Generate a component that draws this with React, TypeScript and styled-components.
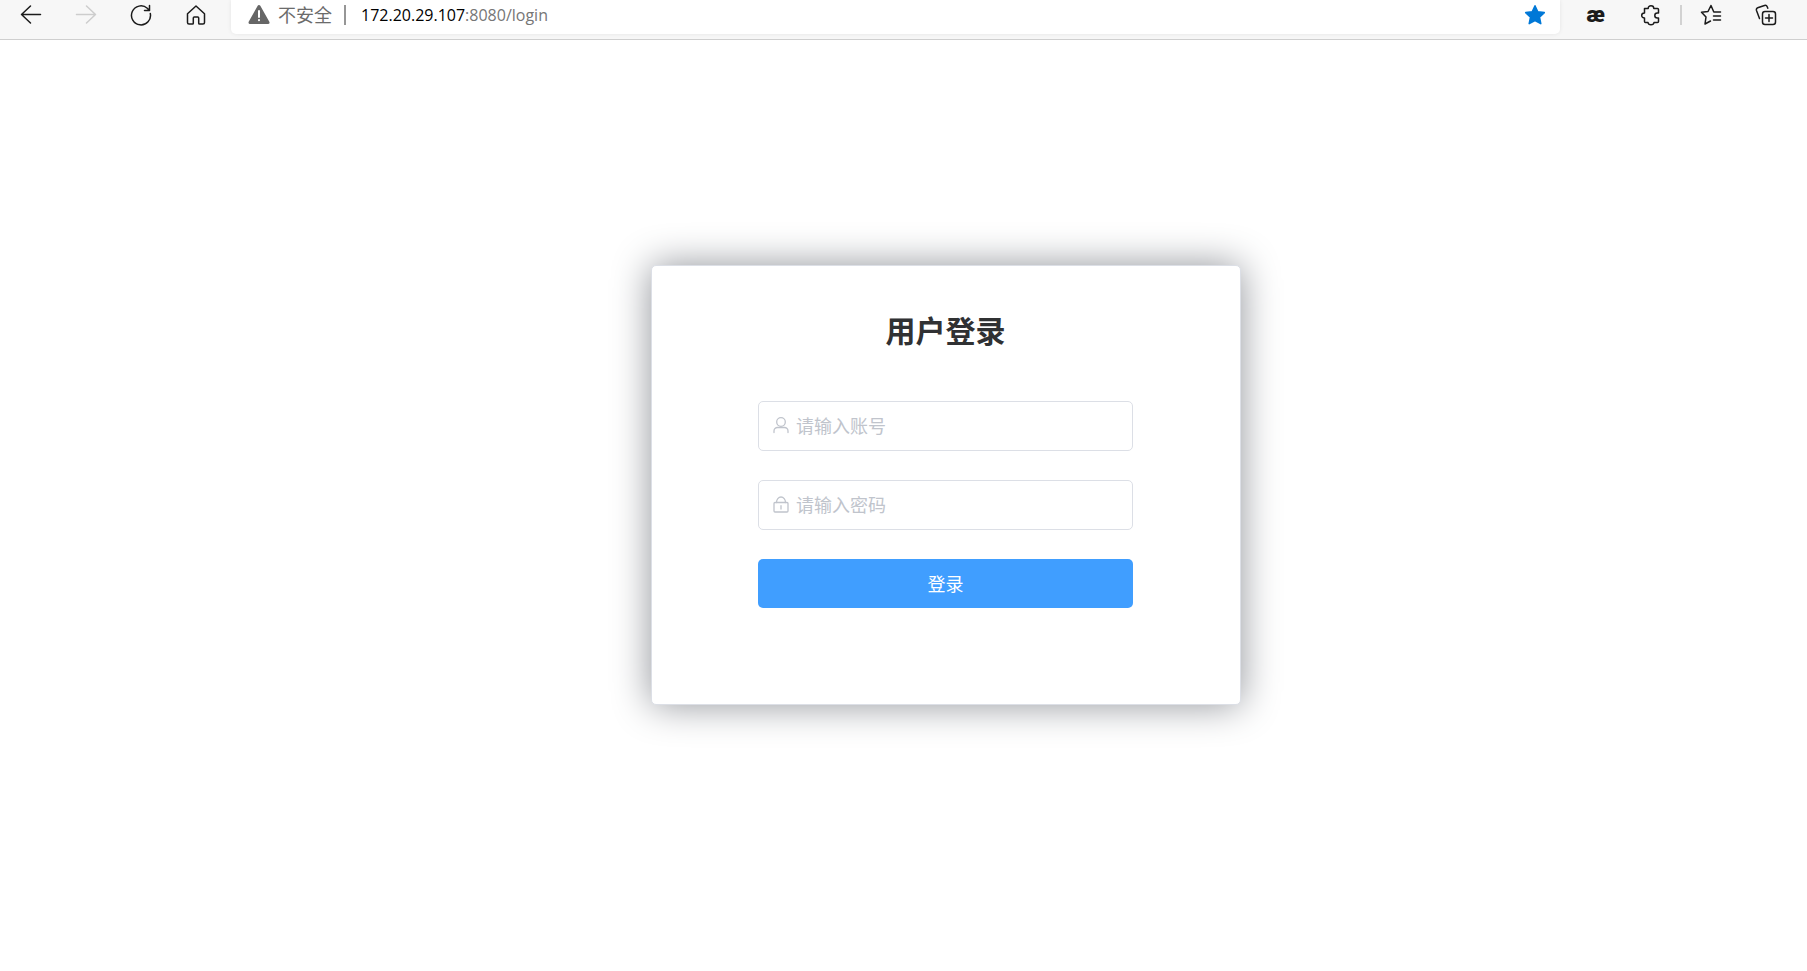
import React from "react";
import styled, { createGlobalStyle } from "styled-components";

const GlobalStyle = createGlobalStyle`
  * { box-sizing: border-box; }
  body {
    margin: 0;
    background: #fff;
    font-family: "Open Sans", "Noto Sans CJK SC", sans-serif;
  }
  button, input { font: inherit; }
`;

const Page = styled.div`
  display: flex;
  flex-direction: column;
  min-height: 100vh;
`;

const Toolbar = styled.header`
  display: flex;
  height: 40px;
  padding: 0 14px 0 3px;
  background: #f7f7f7;
  border-bottom: 1px solid #cfcfcf;
`;

const ToolButton = styled.button<{ $muted?: boolean }>`
  display: flex;
  align-items: center;
  justify-content: center;
  width: 55px;
  height: 29px;
  padding: 0;
  border: 0;
  background: none;
  color: ${(p) => (p.$muted ? "#cdcdcd" : "#1b1b1b")};
`;

const AddressBar = styled.div`
  flex: 1;
  display: flex;
  align-items: center;
  height: 34px;
  margin: 0 8px;
  padding: 0 13px 4px 17px;
  background: #fff;
  border-radius: 0 0 5px 5px;
  box-shadow: 0 0 4px rgba(0, 0, 0, 0.08);
`;

const SecurityNote = styled.span`
  margin-left: 8px;
  font-size: 18px;
  line-height: 28px;
  color: #6b6b6b;
`;

const AddressDivider = styled.span`
  width: 2px;
  height: 20px;
  margin: 0 15px 0 12px;
  background: #969696;
`;

const Url = styled.a`
  flex: 1;
  font-size: 16px;
  line-height: 28px;
  color: #767676;
  text-decoration: none;
`;

const Host = styled.span`
  color: #000;
`;

const StarButton = styled(ToolButton)`
  width: 24px;
  color: #0078d7;
`;

const ExtensionMark = styled.span`
  font-family: Roboto, sans-serif;
  font-size: 22px;
  font-weight: 900;
  line-height: 24px;
`;

const ToolDivider = styled.span`
  width: 2px;
  height: 20px;
  margin: 5px 1px 0 2px;
  background: #d2d2d2;
`;

const Stage = styled.main`
  flex: 1;
  display: flex;
  align-items: center;
  justify-content: center;
  padding: 0 0 41px 84px;
`;

const Card = styled.form`
  display: flex;
  flex-direction: column;
  align-items: center;
  width: 590px;
  padding: 43px 24px 96px;
  background: #fff;
  border: 1px solid #dcdfe6;
  border-radius: 5px;
  box-shadow: 0 0 38px #909399;
`;

const Title = styled.h1`
  margin: 0 0 48px;
  font-size: 30px;
  font-weight: 700;
  line-height: 44px;
  color: #303133;
`;

const Fields = styled.div`
  display: flex;
  flex-direction: column;
  gap: 29px;
  width: 375px;
`;

const Field = styled.label`
  display: flex;
  align-items: center;
  gap: 6px;
  height: 50px;
  padding: 0 13px;
  border: 1px solid #dcdfe6;
  border-radius: 5px;
  color: #c0c4cc;
`;

const TextInput = styled.input`
  flex: 1;
  min-width: 0;
  height: 28px;
  padding: 0;
  border: 0;
  outline: 0;
  background: none;
  font-size: 18px;
  color: #606266;
  &::placeholder { color: #c0c4cc; opacity: 1; }
`;

const SubmitButton = styled.button`
  height: 49px;
  padding: 0;
  border: 0;
  border-radius: 5px;
  background: #409eff;
  color: #fff;
  font-size: 18px;
  line-height: 28px;
`;

type IconProps = { size?: number; width?: number; children: React.ReactNode };

const Icon = ({ size = 22, width = 1.5, children }: IconProps) => (
  <svg
    width={size}
    height={size}
    viewBox={`0 0 ${size} ${size}`}
    fill="none"
    stroke="currentColor"
    strokeWidth={width}
    strokeLinecap="round"
    strokeLinejoin="round"
    aria-hidden="true"
  >
    {children}
  </svg>
);

export default function App() {
  return (
    <Page>
      <GlobalStyle />
      <Toolbar>
        <ToolButton aria-label="后退">
          <Icon><path d="M20.5 10.5H1.5M10.500 2 1.500 10.500l9 8.500" /></Icon>
        </ToolButton>
        <ToolButton aria-label="前进" $muted>
          <Icon><path d="M1.500 10.500h19M11.500 2l9 8.500-9 8.500" /></Icon>
        </ToolButton>
        <ToolButton aria-label="刷新">
          <Icon><path d="M20.300 9.500A9.500 9.500 0 1 1 17.300 4.300L19.500 6.500M19.500 1.500v5h-5" /></Icon>
        </ToolButton>
        <ToolButton aria-label="主页">
          <Icon><path d="M2.500 9.800 11 2l8.500 7.800V18.500a1.500 1.500 0 0 1-1.500 1.500H14.500a.8.8 0 0 1-.8-.8V14a1 1 0 0 0-1-1H9.300a1 1 0 0 0-1 1v5.200a.8.8 0 0 1-.8.8H4a1.500 1.500 0 0 1-1.500-1.500z" /></Icon>
        </ToolButton>
        <AddressBar>
          <Icon>
            <path d="M11 2.500 20 18.500H2z" fill="#666" stroke="#666" strokeWidth={3} />
            <path d="M11 7v6M11 16v.2" stroke="#fff" strokeWidth={2} />
          </Icon>
          <SecurityNote>不安全</SecurityNote>
          <AddressDivider />
          <Url href="#login"><Host>172.20.29.107</Host>:8080/login</Url>
          <StarButton type="button" aria-label="收藏">
            <Icon><path d="M11 1.800l2.800 6 6.500.8-4.800 4.500 1.300 6.600L11 16.500l-5.800 3.200 1.300-6.600L1.700 8.600l6.500-.8z" fill="currentColor" /></Icon>
          </StarButton>
        </AddressBar>
        <ToolButton><ExtensionMark>æ</ExtensionMark></ToolButton>
        <ToolButton aria-label="扩展">
          <Icon><path d="M4.500 4.500H8.200C8.200 2.800 9.300 1.800 11 1.800s2.800 1 2.800 2.700h3.700q1 0 1 1V9h-1.200a2.500 2.500 0 0 0 0 5h1.200v3.500q0 1-1 1H14c-.2 1.600-1.300 2.200-3 2.200s-2.800-.6-3-2.200H5.500q-1 0-1-1V14C2.800 14 1.700 13 1.700 11.500S2.800 9 4.500 9z" /></Icon>
        </ToolButton>
        <ToolDivider />
        <ToolButton aria-label="收藏夹">
          <Icon><path d="M20.500 8H13.800L11 1.500 8 7.500 1.500 8.200 6 13 5 20l5.500-3M13.500 12h7M13.500 16h7" /></Icon>
        </ToolButton>
        <ToolButton aria-label="集锦">
          <Icon>
            <rect x="7.500" y="7.500" width="13" height="13" rx="2.500" />
            <path d="M14 10.500v7M10.500 14h7M4.500 14.500 1.500 6.500q-.6-2 1.200-2.700L9.500 1.500q2-.6 2.700 1.200l.6 1.500" />
          </Icon>
        </ToolButton>
      </Toolbar>
      <Stage>
        <Card onSubmit={(e) => e.preventDefault()}>
          <Title>用户登录</Title>
          <Fields>
            <Field>
              <Icon size={18} width={1.3}>
                <circle cx="9" cy="5" r="4.300" />
                <path d="M2 15.500v-1.500a3.500 3.500 0 0 1 3.500-3.500h7a3.500 3.500 0 0 1 3.500 3.500v1.500" />
              </Icon>
              <TextInput type="text" placeholder="请输入账号" aria-label="账号" />
            </Field>
            <Field>
              <Icon size={18} width={1.3}>
                <rect x="2" y="6.500" width="14" height="9.500" rx="1" />
                <path d="M4.500 6.500a4.500 5.500 0 0 1 9 0M9 9.700v3.300" />
              </Icon>
              <TextInput type="password" placeholder="请输入密码" aria-label="密码" />
            </Field>
            <SubmitButton type="submit">登录</SubmitButton>
          </Fields>
        </Card>
      </Stage>
    </Page>
  );
}
